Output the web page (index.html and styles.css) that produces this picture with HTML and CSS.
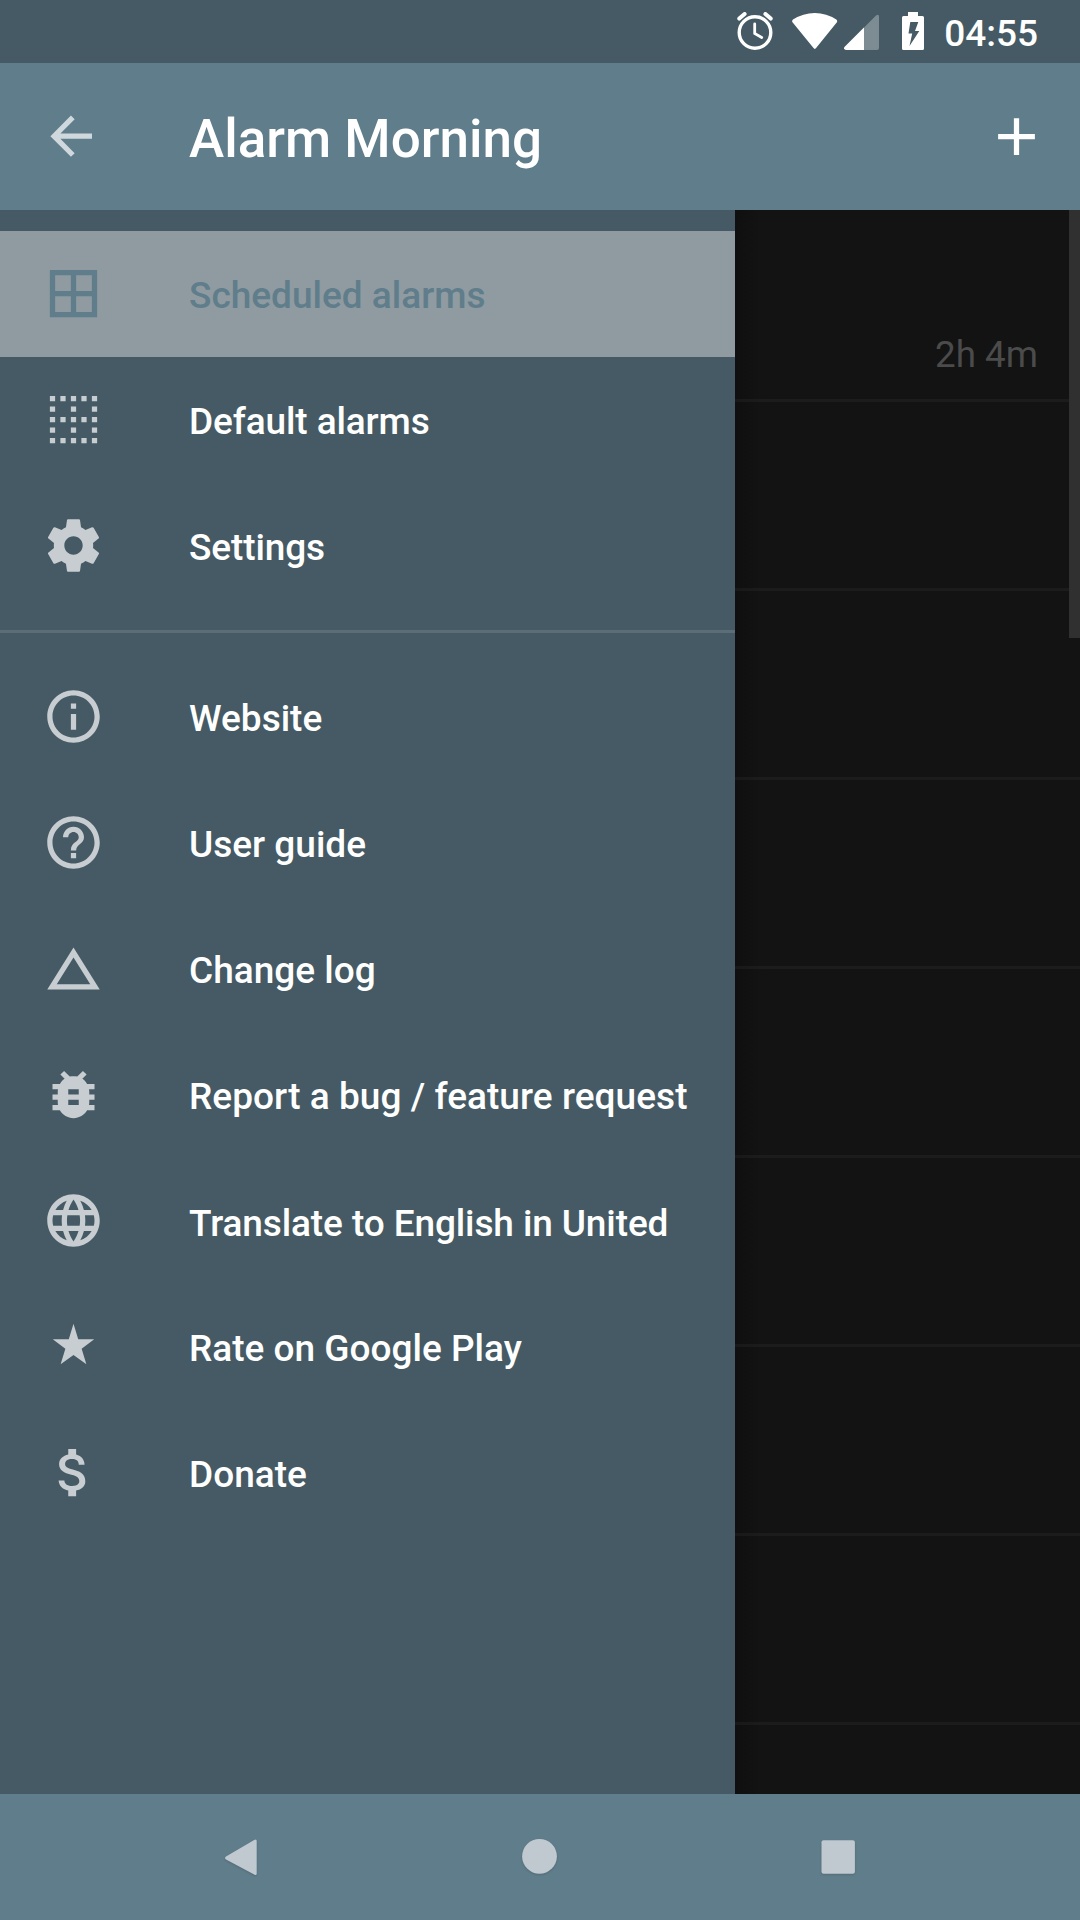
FILE: index.html
```html
<!DOCTYPE html>
<html lang="en">
<head>
<meta charset="utf-8">
<title>Alarm Morning</title>
<link rel="stylesheet" href="styles.css">
</head>
<body>
<div class="screen">
  <header class="status-bar">
    <svg class="status-alarm" viewBox="0 0 36 38" width="36" height="38"><g fill="none" stroke="#fff" stroke-linecap="round"><circle cx="18" cy="20.5" r="15.8" stroke-width="3.4"/><path d="M17.7 12v9.5l7 4" stroke-width="2.8"/><path d="M2.3 6.6l5.3-4.6M33.7 6.6L28.4 2" stroke-width="4"/></g></svg>
    <svg class="status-wifi" viewBox="0 0 46 38" width="46" height="38"><path d="M.7 9.5C-.2 8.500 0 7.300 1 6.600Q11 0 22.800 0T44.300 6.600C45.300 7.300 45.500 8.500 44.700 9.500L24.300 34.800Q22.800 37 21.300 34.800z" fill="#fff"/></svg>
    <svg class="status-signal" viewBox="0 0 36 38" width="36" height="38"><path d="M.5 34L32 2.600Q35 .5 35 4V35q0 2-2 2H2Q-1 36 .5 34z" fill="#fff" fill-opacity=".3"/><path d="M.5 34L20 14.500V37H2Q-1 36 .5 34z" fill="#fff"/></svg>
    <svg class="status-battery" viewBox="0 0 22 38" width="22" height="38"><path fill="#fff" fill-rule="evenodd" d="M6 0h10v4h4.500q1.500 0 1.500 1.500v31q0 1.500-1.500 1.500h-19Q0 38 0 36.500v-31Q0 4 1.500 4H6zM8.300 10L6.500 21.500h3.700L7.500 34 17.300 19H13l3.300-9z"/></svg>
    <span class="clock">04:55</span>
  </header>

  <div class="app-bar">
    <svg class="back" viewBox="0 0 63 63"><path d="M30.800 12.400L12.100 31.200L30.800 50M12 31.200H50" fill="none" stroke="currentColor" stroke-width="5.250"/></svg>
    <h1 class="title">Alarm Morning</h1>
    <svg class="add" viewBox="0 0 24 24"><path d="M19 13h-6v6h-2v-6H5v-2h6V5h2v6h6v2z"/></svg>
  </div>

  <div class="content">
    <nav class="drawer">
      <ul class="menu">
        <li class="item selected"><svg class="icon" viewBox="0 0 24 24"><path d="M3 3v18h18V3H3zm8 16H5v-6h6v6zm0-8H5V5h6v6zm8 8h-6v-6h6v6zm0-8h-6V5h6v6z"/></svg><span>Scheduled alarms</span></li>
        <li class="item tight"><svg class="icon" viewBox="0 0 24 24"><path d="M3 3h2v2H3zM7 3h2v2H7zM11 3h2v2h-2zM15 3h2v2h-2zM19 3h2v2h-2zM3 7h2v2H3zM11 7h2v2h-2zM19 7h2v2h-2zM3 11h2v2H3zM7 11h2v2H7zM11 11h2v2h-2zM15 11h2v2h-2zM19 11h2v2h-2zM3 15h2v2H3zM11 15h2v2h-2zM19 15h2v2h-2zM3 19h2v2H3zM7 19h2v2H7zM11 19h2v2h-2zM15 19h2v2h-2zM19 19h2v2h-2z"/></svg><span>Default alarms</span></li>
        <li class="item tight"><svg class="icon" viewBox="0 0 24 24"><path d="M19.430 12.980c.04-.32.07-.64.07-.98s-.03-.66-.07-.98l2.110-1.650c.19-.15.24-.42.12-.64l-2-3.460c-.12-.22-.39-.3-.61-.22l-2.490 1c-.52-.4-1.080-.73-1.690-.98l-.38-2.650C14.460 2.180 14.250 2 14 2h-4c-.25 0-.46.18-.49.42l-.38 2.650c-.61.25-1.170.59-1.690.98l-2.490-1c-.23-.09-.49 0-.61.22l-2 3.460c-.13.22-.07.49.12.64l2.110 1.650c-.04.32-.07.65-.07.98s.03.66.07.98l-2.110 1.650c-.19.15-.24.42-.12.64l2 3.460c.12.22.39.3.61.22l2.490-1c.52.4 1.080.73 1.690.98l.38 2.650c.03.24.24.42.49.42h4c.25 0 .46-.18.49-.42l.38-2.650c.61-.25 1.170-.59 1.690-.98l2.490 1c.23.09.49 0 .61-.22l2-3.460c.12-.22.07-.49-.12-.64l-2.110-1.650zM12 15.500c-1.930 0-3.500-1.570-3.500-3.500s1.570-3.500 3.500-3.500 3.500 1.570 3.500 3.500-1.570 3.500-3.500 3.500z"/></svg><span>Settings</span></li>
      </ul>
      <ul class="menu secondary">
        <li class="item"><svg class="icon" viewBox="0 0 24 24"><path d="M11 17h2v-6h-2v6zm1-15C6.480 2 2 6.480 2 12s4.480 10 10 10 10-4.480 10-10S17.520 2 12 2zm0 18c-4.410 0-8-3.590-8-8s3.590-8 8-8 8 3.590 8 8-3.590 8-8 8zM11 9h2V7h-2v2z"/></svg><span>Website</span></li>
        <li class="item"><svg class="icon" viewBox="0 0 24 24"><path d="M11 18h2v-2h-2v2zm1-16C6.480 2 2 6.480 2 12s4.480 10 10 10 10-4.480 10-10S17.520 2 12 2zm0 18c-4.410 0-8-3.590-8-8s3.590-8 8-8 8 3.590 8 8-3.590 8-8 8zm0-14c-2.210 0-4 1.790-4 4h2c0-1.100.9-2 2-2s2 .9 2 2c0 2-3 1.750-3 5h2c0-2.250 3-2.500 3-5 0-2.210-1.790-4-4-4z"/></svg><span>User guide</span></li>
        <li class="item"><svg class="icon" viewBox="0 0 24 24"><path d="M12 7.770L18.390 18H5.610L12 7.770M12 4L2 20h20L12 4z"/></svg><span>Change log</span></li>
        <li class="item loose"><svg class="icon" viewBox="0 0 24 24"><path d="M20 8h-2.810c-.45-.78-1.070-1.450-1.820-1.960L17 4.410 15.590 3l-2.170 2.170C12.960 5.060 12.490 5 12 5c-.49 0-.96.06-1.410.17L8.410 3 7 4.410l1.620 1.630C7.880 6.550 7.260 7.220 6.810 8H4v2h2.090c-.05.33-.09.66-.09 1v1H4v2h2v1c0 .34.04.67.09 1H4v2h2.810c1.040 1.790 2.970 3 5.190 3s4.150-1.210 5.190-3H20v-2h-2.090c.05-.33.09-.66.09-1v-1h2v-2h-2v-1c0-.34-.04-.67-.09-1H20V8zm-6 8h-4v-2h4v2zm0-4h-4v-2h4v2z"/></svg><span>Report a bug / feature request</span></li>
        <li class="item translate tight"><svg class="icon" viewBox="0 0 24 24"><path d="M11.990 2C6.470 2 2 6.480 2 12s4.470 10 9.990 10C17.520 22 22 17.520 22 12S17.520 2 11.990 2zm6.930 6h-2.950c-.32-1.250-.78-2.450-1.380-3.560 1.840.63 3.370 1.910 4.330 3.560zM12 4.040c.83 1.200 1.480 2.530 1.910 3.960h-3.820c.43-1.430 1.080-2.760 1.910-3.960zM4.260 14C4.100 13.360 4 12.690 4 12s.1-1.360.26-2h3.380c-.08.66-.14 1.320-.14 2 0 .68.06 1.340.14 2H4.260zm.82 2h2.950c.32 1.250.78 2.450 1.380 3.560-1.840-.63-3.370-1.900-4.330-3.560zm2.950-8H5.080c.96-1.660 2.490-2.930 4.330-3.560C8.810 5.550 8.350 6.750 8.030 8zM12 19.960c-.83-1.200-1.480-2.530-1.910-3.960h3.820c-.43 1.430-1.080 2.760-1.910 3.960zM14.340 14H9.660c-.09-.66-.16-1.320-.16-2 0-.68.07-1.350.16-2h4.680c.09.65.16 1.320.16 2 0 .68-.07 1.340-.16 2zm.25 5.560c.6-1.110 1.060-2.310 1.380-3.560h2.950c-.96 1.650-2.490 2.930-4.330 3.560zM16.360 14c.08-.66.14-1.320.14-2 0-.68-.06-1.340-.14-2h3.380c.16.64.26 1.310.26 2s-.1 1.360-.26 2h-3.380z"/></svg><span>Translate to English in United</span></li>
        <li class="item"><svg class="icon" viewBox="0 0 24 24"><path d="M12 3.300L13.800 9.200H19.900L15.100 12.900L16.900 18.800L12 15.200L7.100 18.800L8.900 12.900L4.100 9.200H10.200z"/></svg><span>Rate on Google Play</span></li>
        <li class="item"><svg class="icon" viewBox="0 0 24 24"><path d="M11.800 10.900c-2.270-.59-3-1.200-3-2.150 0-1.090 1.010-1.850 2.700-1.850 1.780 0 2.440.85 2.500 2.100h2.210c-.07-1.720-1.120-3.300-3.210-3.810V3h-3v2.160c-1.940.42-3.500 1.680-3.500 3.610 0 2.310 1.910 3.460 4.700 4.130 2.500.6 3 1.480 3 2.410 0 .69-.49 1.790-2.700 1.790-2.060 0-2.870-.92-2.980-2.100h-2.200c.12 2.190 1.760 3.420 3.680 3.830V21h3v-2.150c1.950-.37 3.500-1.500 3.500-3.550 0-2.840-2.430-3.810-4.700-4.400z"/></svg><span>Donate</span></li>
      </ul>
    </nav>

    <main class="alarms">
      <div class="day first"><span class="remaining">2h 4m</span></div>
      <div class="day"></div>
      <div class="day"></div>
      <div class="day"></div>
      <div class="day"></div>
      <div class="day"></div>
      <div class="day"></div>
      <div class="day"></div>
      <div class="day"></div>
      <div class="scrollbar"></div>
    </main>
  </div>

  <footer class="nav-bar">
    <svg viewBox="0 0 64 64"><path d="M47.700 16V48.500Q47.700 51 45.200 49.500L17 34.500Q15 33 17 31.500L45.200 15Q47.700 13.500 47.700 16z"/></svg>
    <svg viewBox="0 0 64 64"><circle cx="31.500" cy="31.300" r="17.400"/></svg>
    <svg viewBox="0 0 64 64"><rect x="14.500" y="15.300" width="33.400" height="33.400" rx="2"/></svg>
  </footer>
</div>
</body>
</html>
```

FILE: styles.css
```css
* {
  box-sizing: border-box;
}

body {
  margin: 0;
  font-family: Roboto, "Noto Sans", sans-serif;
  font-size: 37px;
  font-weight: 500;
  color: #fff;
  background: #131313;
}

svg {
  display: block;
  flex: none;
}

.screen {
  display: flex;
  flex-direction: column;
  width: 1080px;
  height: 1920px;
  overflow: hidden;
}

.status-bar {
  display: flex;
  align-items: flex-start;
  justify-content: flex-end;
  height: 63px;
  padding: 12px 42px 0 0;
  background: #455a64;
}

.status-alarm {
  margin-right: 19px;
}

.status-wifi {
  margin: 1px 6px 0 0;
}

.status-signal {
  margin: 1px 22px 0 0;
}

.status-battery {
  margin-right: 20px;
}

.clock {
  line-height: 43px;
}

.app-bar {
  display: flex;
  align-items: center;
  height: 147px;
  padding: 0 32px 0 42px;
  background: #607d8b;
}

.back {
  width: 63px;
  height: 63px;
  color: #cfd8dc;
}

.title {
  flex: 1;
  margin: 4px 0 0 84px;
  font-size: 53px;
  font-weight: 500;
  line-height: 62px;
}

.add {
  width: 63px;
  height: 63px;
  margin-bottom: 1px;
  fill: #fff;
}

.content {
  display: flex;
  height: 1584px;
}

.drawer {
  width: 735px;
  padding-top: 21px;
  background: #455a64;
}

.menu {
  margin: 0;
  padding: 0;
  list-style: none;
}

.secondary {
  margin-top: 21px;
  padding-top: 21px;
  border-top: 3px solid #5b6e77;
}

.item {
  display: flex;
  gap: 84px;
  height: 126px;
  padding: 31px 0 0 42px;
  line-height: 67px;
  white-space: nowrap;
}

.translate {
  line-height: 69px;
}

.tight {
  letter-spacing: -0.11px;
}

.loose {
  letter-spacing: 0.05px;
}

.icon {
  width: 63px;
  height: 63px;
  fill: #c7cdd1;
}

.selected {
  color: #607d8b;
  background: #8f9ba0;
}

.selected .icon {
  fill: #607d8b;
}

.alarms {
  position: relative;
  flex: 1;
  overflow: hidden;
  background: linear-gradient(to right, #0f0f0f, #131313 26px);
}

.day {
  height: 189px;
  border-bottom: 3px solid rgba(255, 255, 255, 0.04);
}

.first {
  display: flex;
  align-items: flex-end;
  justify-content: flex-end;
  height: 192px;
  padding: 0 42px 23px 0;
}

.remaining {
  font-size: 36.75px;
  font-weight: 400;
  line-height: 43px;
  color: #4b4b4b;
}

.scrollbar {
  position: absolute;
  top: 0;
  right: 0;
  width: 11px;
  height: 428px;
  background: #303030;
}

.nav-bar {
  display: grid;
  grid-template-columns: repeat(3, 1fr);
  place-items: center;
  height: 126px;
  padding: 0 92px;
  background: #607d8b;
}

.nav-bar svg {
  width: 64px;
  height: 64px;
  fill: #bfc9cf;
  filter: drop-shadow(0 1px 1px rgba(0, 0, 0, 0.15));
}
```
